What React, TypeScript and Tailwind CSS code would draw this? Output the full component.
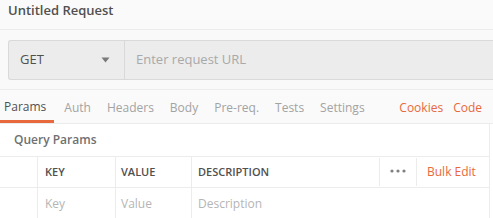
const TABS = ["Params", "Auth", "Headers", "Body", "Pre-req.", "Tests", "Settings"];

export default function App() {
  return (
    <div className="h-[218px] w-[493px] overflow-hidden bg-white font-['Open_Sans',sans-serif] text-[#505050]">
      {/* title */}
      <div className="flex h-[30px] items-start border-b border-[#ececec] bg-[#fafafa] px-2 pt-[1px]">
        <span className="text-[13px] font-semibold leading-[18px]">Untitled Request</span>
      </div>

      {/* url bar */}
      <div className="flex h-[60px] items-center border-b border-[#ececec] bg-[#f9f9f9] pl-2">
        <div className="flex h-[40px] flex-1 rounded-l-[3px] border border-r-0 border-[#d9d9d9] bg-[#ececec]">
          <div className="flex w-[116px] items-center justify-between border-r border-[#d9d9d9] pl-[11px] pr-[14px]">
            <span className="text-[13px]">GET</span>
            <svg width="9" height="6" viewBox="0 0 9 6">
              <path d="M0.5 0.5h8L4.5 5.5z" fill="#7a7a7a" />
            </svg>
          </div>
          <div className="flex items-center pl-[11px] text-[13px] text-[#a9a9a9]">Enter request URL</div>
        </div>
      </div>

      {/* tabs */}
      <div className="flex h-[34px] border-b border-[#ececec] bg-[#fafafa] pr-[3px]">
        <div className="flex gap-2">
          {TABS.map((t, i) => (
            <div
              key={t}
              className={
                i === 0
                  ? "-mr-[2px] flex items-center border-b-[3px] border-[#e8693c] pl-1 pr-2 pt-[3px] text-[12px] text-[#505050]"
                  : "flex items-center px-1 pt-[3px] text-[12px] text-[#a3a3a3]"
              }
            >
              {t}
            </div>
          ))}
        </div>
        <div className="ml-auto flex items-center gap-[10px] pt-[3px] pr-2 text-[12px] text-[#e8693c]">
          <span>Cookies</span>
          <span>Code</span>
        </div>
      </div>

      {/* query params */}
      <div className="mr-[3px] border-r border-[#ececec]">
        <div className="flex h-[32px] items-center pl-[14px] text-[12px] font-semibold text-[#707070]">Query Params</div>
        <div className="flex h-[32px] border-y border-[#ececec] text-[11px] font-semibold">
          <div className="w-[38px] border-r border-[#ececec]" />
          <div className="flex w-[78px] items-center border-r border-[#ececec] pl-[7px]">KEY</div>
          <div className="flex w-[76px] items-center border-r border-[#ececec] pl-[5px]">VALUE</div>
          <div className="flex flex-1 items-center pl-[6px]">DESCRIPTION</div>
          <div className="my-[1px] flex w-[38px] items-center justify-center border-x border-[#ececec] pb-[3px]">
            <svg width="16" height="4" viewBox="0 0 16 4">
              <circle cx="2" cy="2" r="1.6" fill="#808080" />
              <circle cx="8" cy="2" r="1.6" fill="#808080" />
              <circle cx="14" cy="2" r="1.6" fill="#808080" />
            </svg>
          </div>
          <div className="flex w-[72px] items-center pl-[10px] text-[12px] font-normal text-[#e8693c]">Bulk Edit</div>
        </div>
        <div className="flex h-[32px] text-[12px] text-[#b5b5b5]">
          <div className="w-[38px] border-r border-[#ececec]" />
          <div className="flex w-[78px] items-center border-r border-[#ececec] pl-[7px]">Key</div>
          <div className="flex w-[76px] items-center border-r border-[#ececec] pl-[5px]">Value</div>
          <div className="flex flex-1 items-center pl-[6px]">Description</div>
        </div>
      </div>
    </div>
  );
}
